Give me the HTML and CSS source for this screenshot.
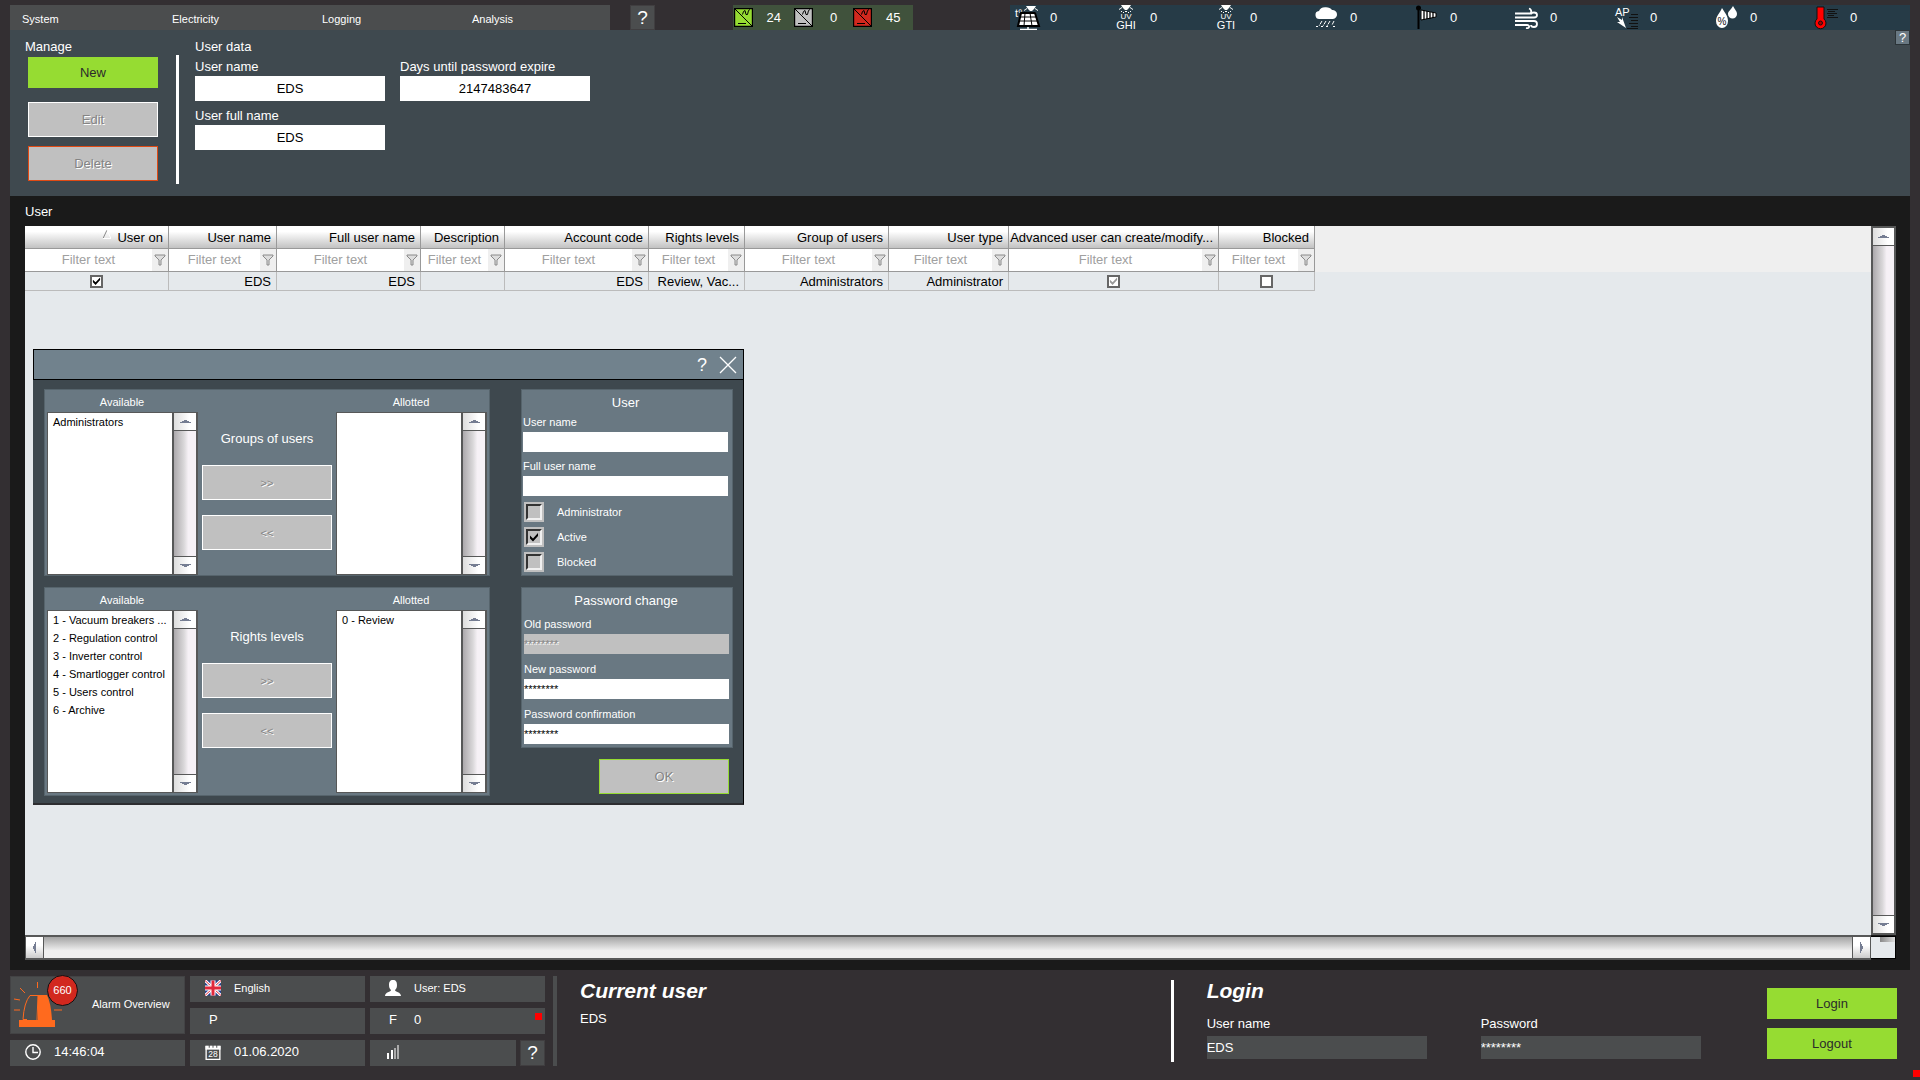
FILE: index.html
```html
<!DOCTYPE html>
<html lang="en">
<head>
<meta charset="utf-8">
<title>User administration</title>
<link rel="stylesheet" href="styles.css">
</head>
<body>
<svg class="defs" aria-hidden="true">
  <symbol id="up" viewBox="0 0 11 3"><path d="M0 2h11v1H0zM2 1h7v1H2zM4 0h3v1H4z"/></symbol>
  <symbol id="down" viewBox="0 0 11 3"><path d="M0 0h11v1H0zM2 1h7v1H2zM4 2h3v1H4z"/></symbol>
  <symbol id="left" viewBox="0 0 3 11"><path d="M2 0h1v11H2zM1 2h1v7H1zM0 4h1v3H0z"/></symbol>
  <symbol id="right" viewBox="0 0 3 11"><path d="M0 0h1v11H0zM1 2h1v7H1zM2 4h1v3H2z"/></symbol>
  <symbol id="funnel" viewBox="0 0 12 12"><path d="M1 1h10v1L7 6v5H5V6L1 2z" fill="#ddd" stroke="#8a8a8a"/></symbol>
  <symbol id="inverter" viewBox="0 0 19 19"><path d="M.600.600h17.800v17.800H.600z" stroke="#000" stroke-width="1.200"/><path d="M1 1l17 17M4 15.500h8M8.500 6.500l1-3 1.500-1 1 4 1.500 0 1-4 1.500-1" fill="none" stroke="#000"/></symbol>
  <symbol id="lamp" viewBox="0 0 14 9"><path d="M2 0h10l-2 3-2 2H6L4 3zM0 4l3-2v1L0 5zM14 4l-3-2v1l3 2zM2 6h1v1H2zM11 6h1v1h-1zM4 7h1v1H4zM9 7h1v1H9zM6 6h2v1H6z" fill="#fff"/></symbol>
</svg>

<header class="topbar">
  <nav class="menu">
    <a href="#">System</a><a href="#">Electricity</a><a href="#">Logging</a><a href="#">Analysis</a>
  </nav>
  <button class="help">?</button>
  <div class="inverters">
    <span class="state"><svg fill="#96dc32"><use href="#inverter"/></svg><b>24</b></span>
    <span class="state"><svg fill="#c0c0c0"><use href="#inverter"/></svg><b>0</b></span>
    <span class="state"><svg fill="#d2281e"><use href="#inverter"/></svg><b>45</b></span>
  </div>
  <div class="sensors">
    <span class="sensor"><svg viewBox="0 0 28 25"><use href="#lamp" x="10" y="1" width="14" height="9"/><text x="1" y="12" font-size="11">t°</text><path d="M7 8h14l4 13H4z" fill="#fff" stroke="#000" stroke-width="2"/><path d="M6 12h17M5 16h19M11 8l-1 13M16 8l2 13" stroke="#000"/><path d="M14 22v2M6 24.500h17" stroke="#fff" stroke-width="1.500"/></svg>0</span>
    <span class="sensor"><svg viewBox="0 0 28 25"><use href="#lamp" x="5" y="0" width="14" height="9"/><text x="12" y="14" font-size="8" text-anchor="middle">UV</text><text x="12" y="24" font-size="11" text-anchor="middle">GHI</text></svg>0</span>
    <span class="sensor"><svg viewBox="0 0 28 25"><use href="#lamp" x="5" y="0" width="14" height="9"/><text x="12" y="14" font-size="8" text-anchor="middle">UV</text><text x="12" y="24" font-size="11" text-anchor="middle">GTI</text></svg>0</span>
    <span class="sensor"><svg viewBox="0 0 28 25"><path d="M6 14a4 4 0 0 1-1-8 7 5 0 0 1 13-1 4.500 4.500 0 0 1 1 9z" fill="#fff"/><path d="M8 16l-3 5M12 16l-3 5M16 16l-3 5M20 16l-2 4" stroke="#fff" stroke-dasharray="4 1"/><path d="M2 21h2v1H2zM7 21h2v1H7zM12 21h2v1h-2zM19 21h2v1h-2z" fill="#fff"/></svg>0</span>
    <span class="sensor"><svg viewBox="0 0 28 25"><path d="M4.500 2v22" stroke="#000" stroke-width="2"/><circle cx="4.500" cy="3" r="2.500"/><path d="M7 5l15 3v4L7 15z" fill="#fff" stroke="#000"/><path d="M10 5v10M13 6v8M16 7v7M19 7v6" stroke="#000" stroke-width="1.300"/></svg>0</span>
    <span class="sensor"><svg viewBox="0 0 28 25"><path d="M1 8.500h14c3 0 3-4 0-5M1 12.500h19c4 0 4-5 0-5-2 0-3 1-3 2M1 16h19c4 0 4 6 0 6-2 0-3-1-3-2M1 20h12c3 0 3 4-1 3" fill="none" stroke="#fff" stroke-width="1.800"/></svg>0</span>
    <span class="sensor"><svg viewBox="0 0 28 25"><text x="1" y="11" font-size="11">AP</text><path d="M3 12l5 3v-3l4 11-9-6h3z" fill="#fff"/><path d="M17 9.500h7M15 12.500h9M17 15.500h7M15 18.500h9M17 21.500h7M13 23.500h11" stroke="#111"/></svg>0</span>
    <span class="sensor"><svg viewBox="0 0 28 25"><path d="M8 3c3 5 6 8 6 13a6 7 0 0 1-12 0c0-5 4-8 6-13zM19 1c2 4 4 5 4 8a4 4 0 0 1-9 0c0-3 3-4 5-8z" fill="#fff"/><text x="8" y="20" font-size="10" text-anchor="middle" class="ink">%</text></svg>0</span>
    <span class="sensor"><svg viewBox="0 0 28 25"><path d="M3 2h7v12a5.500 5.500 0 1 1-7 0z" fill="#f00" stroke="#111"/><circle cx="6.500" cy="18" r="2" fill="#a00" stroke="#111"/><path d="M13 4.500h11M14 6.500h7M13 8.500h10M14 10.500h6M13 12.500h11" stroke="#111"/></svg>0</span>
  </div>
</header>

<section class="userbar">
  <div class="manage">
    <h2>Manage</h2>
    <button class="btn green">New</button>
    <button class="btn off" disabled>Edit</button>
    <button class="btn off danger" disabled>Delete</button>
  </div>
  <div class="userdata">
    <h2>User data</h2>
    <div class="fields">
      <label>User name<input value="EDS"></label>
      <label>Days until password expire<input value="2147483647"></label>
      <label>User full name<input value="EDS"></label>
    </div>
  </div>
  <button class="mini-help">?</button>
</section>

<main class="content">
  <h2>User</h2>
  <div class="gridbox">
    <div class="sheet">
      <div class="headband">
      <table>
        <colgroup><col class="w144"><col class="w108"><col class="w144"><col class="w84"><col class="w144"><col class="w96"><col class="w144"><col class="w120"><col class="w210"><col class="w96"></colgroup>
        <thead>
          <tr class="heads"><th><svg class="sort" viewBox="0 0 8 9"><path d="M0 8.500L4 0" fill="none" stroke="#888"/><path d="M4 0l4 8.500H0" fill="none" stroke="#fff"/></svg>User on</th><th>User name</th><th>Full user name</th><th>Description</th><th>Account code</th><th>Rights levels</th><th>Group of users</th><th>User type</th><th>Advanced user can create/modify...</th><th>Blocked</th></tr>
          <tr class="filters">
            <td><div><input placeholder="Filter text" aria-label="Filter user on"><button aria-label="Filter"><svg><use href="#funnel"/></svg></button></div></td>
            <td><div><input placeholder="Filter text" aria-label="Filter user name"><button aria-label="Filter"><svg><use href="#funnel"/></svg></button></div></td>
            <td><div><input placeholder="Filter text" aria-label="Filter full user name"><button aria-label="Filter"><svg><use href="#funnel"/></svg></button></div></td>
            <td><div><input placeholder="Filter text" aria-label="Filter description"><button aria-label="Filter"><svg><use href="#funnel"/></svg></button></div></td>
            <td><div><input placeholder="Filter text" aria-label="Filter account code"><button aria-label="Filter"><svg><use href="#funnel"/></svg></button></div></td>
            <td><div><input placeholder="Filter text" aria-label="Filter rights levels"><button aria-label="Filter"><svg><use href="#funnel"/></svg></button></div></td>
            <td><div><input placeholder="Filter text" aria-label="Filter group of users"><button aria-label="Filter"><svg><use href="#funnel"/></svg></button></div></td>
            <td><div><input placeholder="Filter text" aria-label="Filter user type"><button aria-label="Filter"><svg><use href="#funnel"/></svg></button></div></td>
            <td><div><input placeholder="Filter text" aria-label="Filter advanced user"><button aria-label="Filter"><svg><use href="#funnel"/></svg></button></div></td>
            <td><div><input placeholder="Filter text" aria-label="Filter blocked"><button aria-label="Filter"><svg><use href="#funnel"/></svg></button></div></td>
          </tr>
        </thead>
        <tbody>
          <tr><td class="mid"><input type="checkbox" checked aria-label="User on"></td><td>EDS</td><td>EDS</td><td></td><td>EDS</td><td>Review, Vac...</td><td>Administrators</td><td>Administrator</td><td class="mid"><input type="checkbox" checked disabled aria-label="Advanced user"></td><td class="mid"><input type="checkbox" aria-label="Blocked"></td></tr>
        </tbody>
      </table>
      </div>
    </div>
    <div class="vscroll"><button aria-label="Scroll up"><svg><use href="#up"/></svg></button><button aria-label="Scroll down"><svg><use href="#down"/></svg></button></div>
    <div class="hscroll"><button aria-label="Scroll left"><svg><use href="#left"/></svg></button><button aria-label="Scroll right"><svg><use href="#right"/></svg></button></div>
    <div class="corner"></div>
  </div>

  <div class="dialog" role="dialog" aria-label="User">
    <div class="titlebar">
      <button aria-label="Help">?</button>
      <button aria-label="Close"><svg viewBox="0 0 18 18"><path d="M1 1l16 16M17 1L1 17" stroke="#fff" stroke-width="1.300"/></svg></button>
    </div>
    <div class="dialog-body">
      <div class="column">
        <section class="panel transfer">
          <label for="ga">Available</label><span></span><label for="gb">Allotted</label>
          <div class="listbox">
            <select id="ga" size="8"><option>Administrators</option></select>
            <div class="vscroll"><button aria-label="Scroll up"><svg><use href="#up"/></svg></button><button aria-label="Scroll down"><svg><use href="#down"/></svg></button></div>
          </div>
          <div class="moves"><h3>Groups of users</h3><button class="btn off small" disabled>&gt;&gt;</button><button class="btn off small" disabled>&lt;&lt;</button></div>
          <div class="listbox">
            <select id="gb" size="8"></select>
            <div class="vscroll"><button aria-label="Scroll up"><svg><use href="#up"/></svg></button><button aria-label="Scroll down"><svg><use href="#down"/></svg></button></div>
          </div>
        </section>
        <section class="panel transfer tall">
          <label for="ra">Available</label><span></span><label for="rb">Allotted</label>
          <div class="listbox">
            <select id="ra" size="8"><option>1 - Vacuum breakers ...</option><option>2 - Regulation control</option><option>3 - Inverter control</option><option>4 - Smartlogger control</option><option>5 - Users control</option><option>6 - Archive</option></select>
            <div class="vscroll"><button aria-label="Scroll up"><svg><use href="#up"/></svg></button><button aria-label="Scroll down"><svg><use href="#down"/></svg></button></div>
          </div>
          <div class="moves"><h3>Rights levels</h3><button class="btn off small" disabled>&gt;&gt;</button><button class="btn off small" disabled>&lt;&lt;</button></div>
          <div class="listbox">
            <select id="rb" size="8"><option>0 - Review</option></select>
            <div class="vscroll"><button aria-label="Scroll up"><svg><use href="#up"/></svg></button><button aria-label="Scroll down"><svg><use href="#down"/></svg></button></div>
          </div>
        </section>
      </div>
      <div class="column side">
        <section class="panel form">
          <h3>User</h3>
          <label>User name<input></label>
          <label>Full user name<input></label>
          <div class="checks">
            <label><input type="checkbox">Administrator</label>
            <label><input type="checkbox" checked>Active</label>
            <label><input type="checkbox">Blocked</label>
          </div>
        </section>
        <section class="panel form secret">
          <h3>Password change</h3>
          <label>Old password<input value="********" disabled></label>
          <label>New password<input value="********"></label>
          <label>Password confirmation<input value="********"></label>
        </section>
        <button class="btn off ok" disabled>OK</button>
      </div>
    </div>
  </div>
</main>

<footer class="footer">
  <div class="tiles">
    <button class="tile alarm">
      <svg viewBox="0 0 60 58"><path d="M9 45h36v7H9zM28 20h9q4 8 5 25H28z" fill="#ff6a1e"/><path d="M28 20.500h-8q-6 7-7 24h4M28 20l-1 25M27.500 7v6M10 13l5 5M4 24l6 1M4 35h6M44 35h8M44 25l7-1" fill="none" stroke="#ff6a1e"/></svg>
      <span class="badge">660</span>
      Alarm Overview
    </button>
    <button class="tile small"><svg viewBox="0 0 16 15"><path d="M0 0h16v15H0z" fill="#23408f"/><path d="M0 0l16 15M16 0L0 15" stroke="#fff" stroke-width="3"/><path d="M0 0l16 15M16 0L0 15" stroke="#e0283c"/><path d="M8 0v15M0 7.500h16" stroke="#fff" stroke-width="5"/><path d="M8 0v15M0 7.500h16" stroke="#e0283c" stroke-width="3"/></svg>English</button>
    <button class="tile small"><svg viewBox="0 0 16 16"><path d="M8 0c3 0 4 2 4 5s-1 4-2 5c0 2 6 2 6 6H0c0-4 6-4 6-6-1-1-2-2-2-5s1-5 4-5z" fill="#fff"/></svg><span>User: EDS</span></button>
    <div class="tile"><i>P</i></div>
    <div class="tile"><i>F</i>0<span class="flag"></span></div>
    <div class="tile"><svg viewBox="0 0 16 16"><circle cx="8" cy="8" r="7.200" fill="none" stroke="#fff" stroke-width="1.400"/><path d="M8 3v5.500h5" fill="none" stroke="#fff" stroke-width="1.400"/></svg>14:46:04</div>
    <div class="tile"><svg viewBox="0 0 16 17"><path d="M.700 2.500h14.600v13.800H.700z" fill="none" stroke="#fff" stroke-width="1.400"/><path d="M0 2h16v4H0z" fill="#fff"/><path d="M4 0v4M8 0v4M12 0v4" stroke="#4b4d4e"/><text x="8" y="14" font-size="9" text-anchor="middle">28</text></svg>01.06.2020</div>
    <div class="split"><div class="tile"><svg viewBox="0 0 16 16"><path d="M2 9h2v6H2zM6 6h2v9H6z" fill="#fff"/><path d="M9 4h2v11H9zM12 1h2v14h-2z" fill="#aaa"/></svg></div><button class="help">?</button></div>
  </div>
  <div class="bar"></div>
  <section class="current"><h1>Current user</h1><p>EDS</p></section>
  <form class="login">
    <div class="credentials">
      <h1>Login</h1>
      <label>User name<input value="EDS"></label>
      <label>Password<input value="********"></label>
    </div>
    <div class="actions"><button type="button" class="btn green">Login</button><button type="button" class="btn green">Logout</button></div>
  </form>
  <span class="alert"></span>
</footer>
</body>
</html>
```

FILE: styles.css
```css
* { box-sizing: border-box; }
body {
  margin: 0;
  min-height: 100vh;
  display: flex;
  flex-direction: column;
  background: #332f32;
  color: #fff;
  font: 13px/16px "Liberation Sans", Arial, sans-serif;
}
button, input, select { font: inherit; color: inherit; margin: 0; padding: 0; border: 0; border-radius: 0; background: none; }
h1, h2, h3, p { margin: 0; font: inherit; }
svg { display: block; flex: none; }
svg text { fill: #fff; }
svg .ink { fill: #111; }
.defs { position: absolute; width: 0; height: 0; }

/* top bar */
.topbar { display: flex; height: 30px; padding: 5px 10px 0; }
.menu { display: flex; flex: 0 1 600px; background: #4b4d4e; font-size: 11px; }
.menu a { flex: 1; padding-left: 12px; color: #fff; text-decoration: none; line-height: 28px; }
.help { flex: none; width: 25px; background: #4b4d4e; border: 1px solid #403e40; font-size: 19px; }
.topbar .help { margin-left: 20px; line-height: 20px; }
.inverters { display: flex; width: 180px; margin-left: 78px; padding-left: 1px; background: #40523c; }
.state { display: flex; align-items: center; width: 60px; }
.state svg { width: 19px; height: 19px; }
.state b { flex: 1; padding-left: 1px; font-weight: normal; text-align: center; }
.sensors { display: flex; flex: 0 1 900px; margin-left: auto; background: #263b47; }
.sensor { flex: 1; display: flex; align-items: center; gap: 8px; padding-left: 4px; }
.sensor svg { width: 28px; height: 25px; }

/* user data bar */
.userbar { display: flex; flex: none; margin: 0 10px; min-height: 166px; padding: 9px 0 0 15px; background: #3f494f; position: relative; }
.btn { display: block; width: 130px; height: 35px; border: 1px solid #fff; }
.green { height: 31px; background: #96dc32; border: 0; color: #2b2b2b; }
.off { background: #c0c0c0; color: #848484; text-shadow: 1px 1px #fff; }
.danger { border-color: #e04a14; }
.small { font-size: 11px; }
.manage { width: 154px; }
.manage h2 { margin-bottom: 2px; }
.manage .btn { margin-left: 3px; }
.manage .btn + .btn { margin-top: 14px; }
.manage .btn + .danger { margin-top: 9px; }
.userdata { position: relative; padding-left: 16px; }
.userdata::before { content: ""; position: absolute; left: -3px; top: 16px; width: 3px; height: 129px; background: #fff; }
.userdata h2 { margin-bottom: 2px; }
.fields { display: grid; grid-template-columns: 190px 190px; gap: 5px 15px; }
.fields label { line-height: 19px; white-space: nowrap; }
.fields input { display: block; width: 100%; height: 25px; background: #fff; color: #000; text-align: center; }
.mini-help { position: absolute; top: 0; right: 0; width: 15px; height: 15px; background: #697882; border: 1px solid #2c3438; line-height: 12px; }

/* user table */
.content { position: relative; flex: 1; display: flex; flex-direction: column; margin: 0 10px; padding: 7px 14px 10px 15px; background: #1a1a1a; }
.content > h2 { line-height: 17px; margin-bottom: 6px; }
.gridbox { flex: 1; display: grid; grid-template: 1fr 25px / minmax(0, 1fr) 25px; }
.sheet { background: #e5e9ec; color: #000; overflow: hidden; }
.headband { background: linear-gradient(#efefef 46px, transparent 46px); }
table { table-layout: fixed; width: 1290px; border-collapse: separate; border-spacing: 0; }
.w84 { width: 84px; } .w96 { width: 96px; } .w108 { width: 108px; } .w120 { width: 120px; }
.w144 { width: 144px; } .w210 { width: 210px; }
th, td { height: 19px; padding: 1px 5px 0 0; border: solid #bbb; border-width: 0 1px 1px 0; font-weight: normal; text-align: right; white-space: nowrap; overflow: hidden; line-height: 16px; }
.heads th { height: 23px; background: linear-gradient(#fff 25%, #c2c2c2); border-color: #999; }
.sort { display: inline-block; width: 8px; height: 9px; margin-right: 6px; vertical-align: top; }
.filters td { height: 23px; padding: 0; border-color: #999; }
.filters div { display: flex; height: 22px; background: #fff; }
.filters input { flex: 1; min-width: 0; text-align: center; }
.filters input::placeholder { color: #a0a0a0; opacity: 1; }
.filters button { width: 16px; background: #efefef; padding-left: 2px; }
.filters svg { width: 12px; height: 12px; }
.mid { padding: 0; text-align: center; }
input[type="checkbox"] { appearance: none; position: relative; }
.mid input { display: block; width: 13px; height: 13px; margin: auto; border: 2px solid #666; background: #fff; }
input[type="checkbox"]:checked::after { content: ""; position: absolute; inset: 0; background: #000; clip-path: polygon(10% 35%, 40% 65%, 90% 10%, 90% 40%, 40% 95%, 10% 65%); }
.mid input:disabled:checked::after { background: #999; }

/* scroll bars */
.vscroll, .hscroll { display: flex; justify-content: space-between; border: 2px solid #575858; }
.vscroll { flex-direction: column; background: linear-gradient(90deg, #aca9ac, #d9d7d9 45%, #f6f1f6 65%); }
.hscroll { background: linear-gradient(#a4a4a4, #d8d8d8 45%, #efefef 65%); border-width: 2px 1px; }
.vscroll button, .hscroll button { display: grid; place-items: center; fill: #757d92; }
.vscroll button { height: 18px; background: linear-gradient(90deg, #ddd, #fff 70%); border-bottom: 1px solid #575858; }
.vscroll button:last-child { border: solid #575858; border-width: 1px 0 0; }
.hscroll button { width: 18px; background: linear-gradient(#fff 40%, #ccc); border-right: 1px solid #575858; }
.hscroll button:last-child { border: solid #575858; border-width: 0 0 0 1px; }
.vscroll svg { width: 11px; height: 3px; }
.hscroll svg { width: 3px; height: 11px; }
.corner { margin: 1px 0; border: solid #000; border-width: 1px 1px 1px 0; background: linear-gradient(90deg, #888, #ddd) right top / 15px 5px no-repeat #e5e9ec; }

/* user dialog */
.dialog { position: absolute; left: 23px; top: 153px; width: 711px; background: #3e484e; border: solid #000; border-width: 0 1px 0 0; border-bottom: 2px solid #2d2d30; font-size: 11px; }
.titlebar { display: flex; justify-content: flex-end; align-items: center; gap: 8px; height: 31px; margin-right: -1px; padding-right: 6px; background: #71828d; border: 1px solid #000; }
.titlebar button { width: 18px; font-size: 18px; }
.dialog-body { display: flex; gap: 31px; padding: 9px 10px 7px 11px; }
.column { display: flex; flex-direction: column; gap: 11px; width: 446px; }
.side { width: 212px; }
.panel { border: 1px solid #56646c; background: #697882; }
.panel h3 { font-size: 13px; text-align: center; }
.transfer { display: grid; grid-template: 22px 163px / 151px 130px 151px; column-gap: 4px; padding-left: 2px; }
.tall { grid-template-rows: 22px 183px; padding-bottom: 2px; }
.transfer > label { width: 150px; line-height: 24px; text-align: center; }
.listbox { display: flex; border: 1px solid #575858; border-width: 1px 0 1px 1px; background: #fff; }
.listbox select { flex: 1; height: 100%; min-width: 0; padding-top: 3px; color: #000; outline: 0; overflow: hidden; }
.listbox option { min-height: 18px; padding: 0 0 0 5px; line-height: 18px; }
.listbox .vscroll { width: 26px; border-width: 0 2px; }
.moves h3 { line-height: 53px; }
.moves .btn + .btn { margin-top: 15px; }
.form { padding: 0 4px 3px 1px; }
.form h3 { line-height: 25px; }
.form > label { display: block; line-height: 15px; }
.form > label + label { margin-top: 7px; }
.form > label > input { display: block; width: 205px; height: 20px; margin-top: 2px; background: #fff; color: #000; }
.form > label > input:disabled { background: #c0c0c0; color: #848484; text-shadow: 1px 1px #fff; }
.checks { display: grid; gap: 5px; margin-top: 6px; padding-left: 1px; }
.checks label { display: flex; align-items: center; gap: 13px; height: 20px; }
.checks input { width: 20px; height: 20px; border: 2px solid #c0c0c0; background: #c0c0c0; }
.checks input::before { content: ""; position: absolute; inset: 0; border: 2px solid; border-color: #333 #f0f0f0 #f0f0f0 #333; }
.checks input[type="checkbox"]:checked::after { inset: 3px; }
.secret { padding-left: 2px; }
.secret h3 { margin-bottom: 4px; }
.secret > label + label { margin-top: 8px; }
.ok { margin-left: 78px; border-color: #96dc32; font-size: 13px; }

/* footer */
.footer { position: relative; flex: none; display: grid; grid-template-columns: 535px 4px minmax(0, 5fr) minmax(0, 6fr); min-height: 110px; padding: 6px 10px 14px; }
.tiles { display: grid; grid-template: repeat(3, 26px) / repeat(3, 1fr); gap: 6px 5px; }
.tile { position: relative; flex: 1; display: flex; align-items: center; gap: 13px; padding: 0 0 2px 15px; background: #4b4d4e; text-align: left; }
.tile svg { width: 16px; height: 16px; }
.tile i { width: 16px; padding-left: 4px; font-style: normal; }
.small.tile { font-size: 11px; }
.alarm { grid-row: span 2; gap: 22px; padding: 0 0 2px; border: 1px solid #434345; font-size: 11px; }
.alarm svg { width: 60px; height: 58px; margin-left: -1px; }
.badge { position: absolute; left: 36px; top: -2px; width: 31px; height: 31px; border: 1px solid #111; border-radius: 50%; background: #d2281e; line-height: 29px; text-align: center; }
.flag { position: absolute; right: 3px; top: 5px; width: 7px; height: 7px; background: #f00; }
.split { display: flex; gap: 4px; }
.bar { position: relative; left: 8px; background: #4b4d4e; }
.current { padding: 4px 0 0 31px; }
h1 { font: italic bold 21px/22px "Liberation Sans", Arial, sans-serif; }
.current p { margin-top: 9px; }
.login { display: flex; justify-content: space-between; margin: 4px 0 4px 3px; padding: 0 13px 0 33px; border-left: 3px solid #fff; }
.credentials { display: grid; grid-template-columns: 220px 220px; column-gap: 54px; align-content: start; }
.credentials h1 { grid-column: span 2; margin-bottom: 12px; }
.credentials label { line-height: 20px; }
.credentials input { display: block; width: 100%; height: 23px; margin-top: 2px; background: #4b4d4e; }
.actions { display: grid; gap: 9px; align-content: start; padding-top: 8px; }
.alert { position: absolute; right: 0; bottom: 3px; width: 7px; height: 7px; background: #f00; }
```
